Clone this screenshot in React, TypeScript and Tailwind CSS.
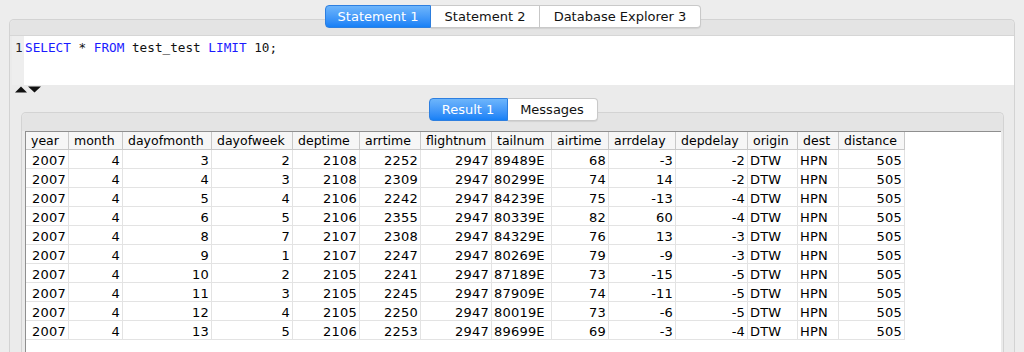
import React from "react";

const cols: { name: string; w: number; align: "l" | "r"; pl?: number }[] = [
  { name: "year", w: 43, align: "l", pl: 6 },
  { name: "month", w: 54, align: "r" },
  { name: "dayofmonth", w: 89, align: "r" },
  { name: "dayofweek", w: 81, align: "r" },
  { name: "deptime", w: 67, align: "r" },
  { name: "arrtime", w: 61, align: "r" },
  { name: "flightnum", w: 71, align: "r" },
  { name: "tailnum", w: 60, align: "l", pl: 2 },
  { name: "airtime", w: 57, align: "r" },
  { name: "arrdelay", w: 67, align: "r" },
  { name: "depdelay", w: 72, align: "r" },
  { name: "origin", w: 50, align: "l", pl: 2 },
  { name: "dest", w: 41, align: "l", pl: 2 },
  { name: "distance", w: 66, align: "r" },
];

const rows: string[][] = [
  ["2007", "4", "3", "2", "2108", "2252", "2947", "89489E", "68", "-3", "-2", "DTW", "HPN", "505"],
  ["2007", "4", "4", "3", "2108", "2309", "2947", "80299E", "74", "14", "-2", "DTW", "HPN", "505"],
  ["2007", "4", "5", "4", "2106", "2242", "2947", "84239E", "75", "-13", "-4", "DTW", "HPN", "505"],
  ["2007", "4", "6", "5", "2106", "2355", "2947", "80339E", "82", "60", "-4", "DTW", "HPN", "505"],
  ["2007", "4", "8", "7", "2107", "2308", "2947", "84329E", "76", "13", "-3", "DTW", "HPN", "505"],
  ["2007", "4", "9", "1", "2107", "2247", "2947", "80269E", "79", "-9", "-3", "DTW", "HPN", "505"],
  ["2007", "4", "10", "2", "2105", "2241", "2947", "87189E", "73", "-15", "-5", "DTW", "HPN", "505"],
  ["2007", "4", "11", "3", "2105", "2245", "2947", "87909E", "74", "-11", "-5", "DTW", "HPN", "505"],
  ["2007", "4", "12", "4", "2105", "2250", "2947", "80019E", "73", "-6", "-5", "DTW", "HPN", "505"],
  ["2007", "4", "13", "5", "2106", "2253", "2947", "89699E", "69", "-3", "-4", "DTW", "HPN", "505"],
];

function Tab({ label, active, first, last }: { label: string; active?: boolean; first?: boolean; last?: boolean }) {
  const base =
    "flex-1 h-[23px] flex items-center justify-center whitespace-nowrap text-[13px] leading-none border-y border-r " +
    (first ? "border-l rounded-l-[4px] " : "") +
    (last ? "rounded-r-[4px] " : "");
  return active ? (
    <div className={base + "bg-gradient-to-b from-[#6db5fb] to-[#1580f6] border-[#2d7fe0] text-white"}>{label}</div>
  ) : (
    <div className={base + "bg-white border-[#c9c9c9] text-[#111] shadow-[0_1px_1px_rgba(0,0,0,0.08)]"}>{label}</div>
  );
}

export default function App() {
  return (
    <div
      className="w-[1024px] h-[352px] overflow-hidden bg-[#ededed] flex"
      style={{ fontFamily: '"DejaVu Sans", "Noto Sans", sans-serif' }}
    >
      <div className="flex-1 flex flex-col pt-[5px]">
        {/* top tabs */}
        <div className="relative z-10 flex justify-center -mb-[9px] pl-[2px]">
          <div className="flex">
            <div className="w-[106px] flex"><Tab label="Statement 1" active first /></div>
            <div className="w-[109px] flex"><Tab label="Statement 2" /></div>
            <div className="w-[161px] flex"><Tab label="Database Explorer 3" last /></div>
          </div>
        </div>

        {/* outer panel */}
        <div className="ml-[9px] mr-[9px] flex-1 border border-b-0 border-[#d3d3d3] rounded-t-[5px] bg-[#ebebeb] flex flex-col">
          <div className="h-[16px] bg-[#e4e4e4] border-b border-[#d6d6d6] rounded-t-[5px]" />
          <div className="h-[49px] flex pl-[2px]">
            <div
              className="w-[12px] bg-[#eeeeee] pl-[3px] pt-[4px] text-[12.7px] leading-[16px] text-[#222]"
              style={{ fontFamily: '"DejaVu Sans Mono", monospace' }}
            >
              1
            </div>
            <div
              className="flex-1 bg-white pl-[1px] pt-[4px] text-[12.7px] leading-[16px] text-[#111] whitespace-pre"
              style={{ fontFamily: '"DejaVu Sans Mono", monospace' }}
            >
              <span className="text-[#1a1aff]">SELECT</span> * <span className="text-[#1a1aff]">FROM</span> test_test{" "}
              <span className="text-[#1a1aff]">LIMIT</span> 10;
            </div>
          </div>
          {/* arrows */}
          <div className="h-[9px] flex items-start pl-[5px] pt-[1px]">
            <svg width="26" height="7" viewBox="0 0 26 7">
              <polygon points="0,6.5 6,0.5 12,6.5" fill="#111" />
              <polygon points="13,0.5 26,0.5 19.5,6.5" fill="#111" />
            </svg>
          </div>

          {/* result tabs */}
          <div className="relative z-10 flex justify-center mt-[4px] -mb-[9px] pl-[2px]">
            <div className="flex">
              <div className="w-[79px] flex"><Tab label="Result 1" active first /></div>
              <div className="w-[90px] flex"><Tab label="Messages" last /></div>
            </div>
          </div>

          {/* result panel */}
          <div className="ml-[11px] mr-[10px] flex-1 border border-b-0 border-[#d3d3d3] rounded-t-[5px] bg-[#ebebeb] flex flex-col">
            <div className="h-[18px] bg-[#e4e4e4] rounded-t-[5px]" />
            <div className="flex-1 ml-[3px] mr-[2px] bg-white border-t border-l border-[#8f8f8f] flex flex-col text-black">
              {/* header */}
              <div className="flex h-[18px] text-[12.5px]">
                {cols.map((c) => (
                  <div
                    key={c.name}
                    className="h-[18px] border-r border-b border-[#c8c8c8] bg-[#f6f6f6] pl-[5px] pt-[1px] flex items-center leading-none"
                    style={{ width: c.w }}
                  >
                    {c.name}
                  </div>
                ))}
              </div>
              {rows.map((r, i) => (
                <div key={i} className="flex h-[19px] text-[13px]">
                  {r.map((v, j) => (
                    <div
                      key={j}
                      className={
                        "h-[19px] border-r border-b border-[#e3e3e3] pt-[2px] flex items-center leading-none tracking-[0.2px] " +
                        (cols[j].align === "r" ? "justify-end pr-[2px]" : "justify-start")
                      }
                      style={{ width: cols[j].w, paddingLeft: cols[j].align === "l" ? cols[j].pl : undefined }}
                    >
                      {v}
                    </div>
                  ))}
                </div>
              ))}
            </div>
          </div>
        </div>
      </div>
    </div>
  );
}
